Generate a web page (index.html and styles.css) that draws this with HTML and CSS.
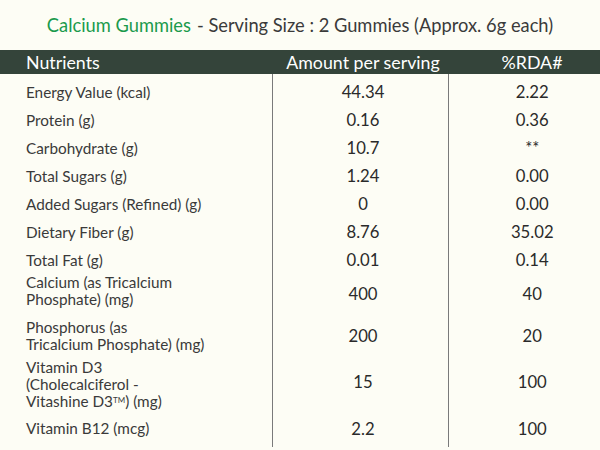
FILE: index.html
```html
<!DOCTYPE html>
<html>
<head>
<meta charset="utf-8">
<link rel="stylesheet" href="styles.css">
</head>
<body>
<div class="page">
  <h1 class="title"><span class="brand">Calcium Gummies</span> - Serving Size : 2 Gummies (Approx. 6g each)</h1>
  <table class="facts">
    <thead>
      <tr>
        <th class="c1">Nutrients</th>
        <th class="c2">Amount per serving</th>
        <th class="c3">%RDA#</th>
      </tr>
    </thead>
    <tbody>
      <tr class="first"><td class="c1">Energy Value (kcal)</td><td class="c2">44.34</td><td class="c3">2.22</td></tr>
      <tr><td class="c1">Protein (g)</td><td class="c2">0.16</td><td class="c3">0.36</td></tr>
      <tr><td class="c1">Carbohydrate (g)</td><td class="c2">10.7</td><td class="c3 stars">**</td></tr>
      <tr><td class="c1">Total Sugars (g)</td><td class="c2">1.24</td><td class="c3">0.00</td></tr>
      <tr><td class="c1">Added Sugars (Refined) (g)</td><td class="c2">0</td><td class="c3">0.00</td></tr>
      <tr><td class="c1">Dietary Fiber (g)</td><td class="c2">8.76</td><td class="c3">35.02</td></tr>
      <tr><td class="c1">Total Fat (g)</td><td class="c2">0.01</td><td class="c3">0.14</td></tr>
      <tr class="two"><td class="c1">Calcium (as Tricalcium<br>Phosphate) (mg)</td><td class="c2">400</td><td class="c3">40</td></tr>
      <tr class="tall"><td class="c1">Phosphorus (as<br>Tricalcium Phosphate) (mg)</td><td class="c2">200</td><td class="c3">20</td></tr>
      <tr class="three"><td class="c1">Vitamin D3<br>(Cholecalciferol -<br>Vitashine D3<sup class="tm">TM</sup>) (mg)</td><td class="c2">15</td><td class="c3">100</td></tr>
      <tr class="last"><td class="c1">Vitamin B12 (mcg)</td><td class="c2">2.2</td><td class="c3">100</td></tr>
    </tbody>
  </table>
</div>
</body>
</html>
```

FILE: styles.css
```css
html, body {
  margin: 0;
  padding: 0;
  background: #fdfdf5;
}
.page {
  width: 600px;
  height: 450px;
  overflow: hidden;
  font-family: "Lato", "DejaVu Sans", sans-serif;
  color: #333333;
}
.title {
  margin: 0;
  height: 50px;
  display: flex;
  align-items: center;
  justify-content: center;
  font-size: 18.3px;
  font-weight: 400;
  color: #3a3a3a;
  white-space: nowrap;
}
.brand {
  color: #1a9a4c;
  margin-right: 6px;
}
.facts {
  width: 600px;
  border-collapse: collapse;
  border-spacing: 0;
  table-layout: fixed;
}
.facts th, .facts td {
  box-sizing: border-box;
}
.facts th {
  background: #34443a;
  color: #ffffff;
  font-weight: 400;
  font-size: 17.8px;
  height: 24px;
  padding: 0;
  line-height: 24px;
}
.facts th.c1 {
  text-align: left;
  padding-left: 26px;
}
.c1 { width: 272px; }
.c2 { width: 176px; }
.c3 { width: 152px; }
.facts td {
  height: 28px;
  padding: 0;
  vertical-align: middle;
}
.facts td.c1 {
  font-size: 15.3px;
  line-height: 17px;
  padding-left: 26px;
  color: #3a3a3a;
}
.facts td.c2, .facts td.c3 {
  font-size: 16.7px;
  text-align: center;
  border-left: 1px solid #7a7a7a;
  color: #2a2a2a;
}
.facts th.c2, .facts td.c2 { padding-left: 6px; }
.facts th.c3, .facts td.c3 { padding-left: 16px; }
.facts tr.first td { height: 32px; padding-top: 4px; }
.facts tr.two td { height: 38px; }
.facts tr.two td.c1 { padding-bottom: 5px; }
.facts tr.tall td { height: 46px; }
.facts tr.three td { height: 51px; }
.facts tr.three td.c2, .facts tr.three td.c3 { padding-bottom: 5px; }
.facts tr.last td { height: 37px; }
.stars { font-size: 12px; }
.tm {
  font-size: 8px;
  vertical-align: top;
  position: relative;
  top: -1px;
}
```
